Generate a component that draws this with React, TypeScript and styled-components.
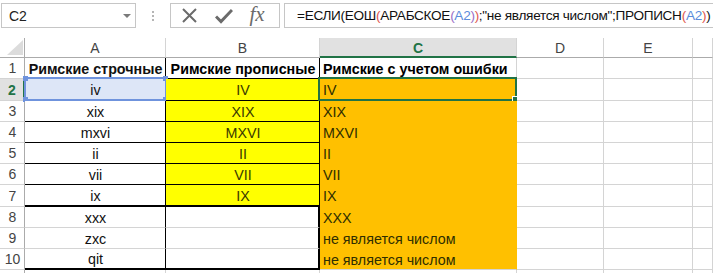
import React from 'react';
import styled, { createGlobalStyle } from 'styled-components';

const GlobalStyle = createGlobalStyle`
	body {
		margin: 0;
		background: #fff;
		font-family: "Liberation Sans", Arial, sans-serif;
		overflow: hidden;
	}
`;

type Row = { a: string; b: string; c: string };

const rows: Row[] = [
	{ a: 'Римские строчные', b: 'Римские прописные', c: 'Римские с учетом ошибки' },
	{ a: 'iv', b: 'IV', c: 'IV' },
	{ a: 'xix', b: 'XIX', c: 'XIX' },
	{ a: 'mxvi', b: 'MXVI', c: 'MXVI' },
	{ a: 'ii', b: 'II', c: 'II' },
	{ a: 'vii', b: 'VII', c: 'VII' },
	{ a: 'ix', b: 'IX', c: 'IX' },
	{ a: 'xxx', b: '', c: 'XXX' },
	{ a: 'zxc', b: '', c: 'не является числом' },
	{ a: 'qit', b: '', c: 'не является числом' },
];

const columns = ['A', 'B', 'C', 'D', 'E', ''];

const GRID = '#d4d4d4';
const BLACK = '#000';
const GREEN = '#217346';
const YELLOW = '#ffff00';
const ORANGE = '#ffc000';

// borders of the A:B block, by row number
const blockBottom = (n: number) => {
	if (n <= 6) return `1px solid ${BLACK}`;
	if (n === 7 || n === 10) return `2px solid ${BLACK}`;
	return `1px solid ${GRID}`;
};

const App: React.FC = () => {
	return (
		<Page>
			<GlobalStyle />
			<FormulaBar>
				<NameBox>
					<span>C2</span>
					<DropArrow />
				</NameBox>
				<Grip>
					<i />
					<i />
					<i />
				</Grip>
				<ButtonGroup>
					<svg width="17" height="17" viewBox="0 0 17 17">
						<path d="M2 2 L15 15 M15 2 L2 15" stroke="#6b6b6b" strokeWidth="2" fill="none" />
					</svg>
					<svg width="18" height="16" viewBox="0 0 18 16">
						<path d="M1 8.5 L6 13.5 L17 2" stroke="#6b6b6b" strokeWidth="3" fill="none" />
					</svg>
					<Fx>fx</Fx>
				</ButtonGroup>
				<FormulaInput>
					=ЕСЛИ(ЕОШ<Red>(</Red>АРАБСКОЕ<Purple>(</Purple>
					<Ref>A2</Ref>
					<Purple>)</Purple>
					<Red>)</Red>;"не является числом";ПРОПИСН<Red>(</Red>
					<Ref>A2</Ref>
					<Red>)</Red>)
				</FormulaInput>
			</FormulaBar>

			<Sheet>
				<Corner>
					<svg width="16" height="15" viewBox="0 0 16 15">
						<polygon points="16,0 16,15 0,15" fill="#dcdcdc" />
					</svg>
				</Corner>
				{columns.map((col, i) => (
					<ColHead key={i} $active={col === 'C'}>
						{col}
					</ColHead>
				))}

				{rows.map((row, i) => {
					const n = i + 1;
					return (
						<React.Fragment key={n}>
							<RowHead $active={n === 2}>{n}</RowHead>
							<Cell
								$align="center"
								$bold={n === 1}
								$fill={n === 2 ? '#dde6f7' : '#fff'}
								$right={`1px solid ${BLACK}`}
								$bottom={blockBottom(n)}
							>
								{row.a}
								{n === 2 && (
									<RefBox>
										<Handle $pos="tl" />
										<Handle $pos="tr" />
										<Handle $pos="bl" />
										<Handle $pos="br" />
									</RefBox>
								)}
							</Cell>
							<Cell
								$align="center"
								$bold={n === 1}
								$fill={n >= 2 && n <= 7 ? YELLOW : '#fff'}
								$color={n === 1 ? '#000' : '#3a3a00'}
								$right={n >= 8 ? `2px solid ${BLACK}` : `1px solid ${BLACK}`}
								$bottom={blockBottom(n)}
							>
								{row.b}
							</Cell>
							<Cell
								$align="left"
								$bold={n === 1}
								$fill={n === 1 ? '#fff' : ORANGE}
								$color={n === 1 ? '#000' : '#2e2e00'}
								$right={`1px solid ${n === 1 ? GRID : ORANGE}`}
								$bottom={`1px solid ${n === 1 || n === 10 ? GRID : ORANGE}`}
							>
								{row.c}
								{n === 2 && (
									<ActiveBox>
										<FillHandle />
									</ActiveBox>
								)}
							</Cell>
							<Cell />
							<Cell />
							<Cell />
						</React.Fragment>
					);
				})}
				<RowHead />
				<Cell />
				<Cell />
				<Cell />
				<Cell />
				<Cell />
				<Cell />
			</Sheet>
		</Page>
	);
};

export default App;

const Page = styled.div`
	width: 713px;
	height: 273px;
	overflow: hidden;
	background: #fff;
`;

const FormulaBar = styled.div`
	display: flex;
	align-items: stretch;
	height: 25px;
	padding: 3px 0 0 1px;
	margin-bottom: 10px;

	& > * {
		flex-shrink: 0;
	}
`;

const NameBox = styled.div`
	box-sizing: border-box;
	width: 135px;
	border: 1px solid #c6c6c6;
	display: flex;
	align-items: center;
	justify-content: space-between;
	padding: 0 4px 0 7px;
	font-size: 14px;
	color: #222;
`;

const DropArrow = styled.div`
	width: 0;
	height: 0;
	border-left: 4px solid transparent;
	border-right: 4px solid transparent;
	border-top: 4px solid #7a7a7a;
`;

const Grip = styled.div`
	width: 34px;
	display: flex;
	flex-direction: column;
	align-items: center;
	justify-content: center;
	gap: 2px;

	i {
		width: 2px;
		height: 2px;
		background: #b5b5b5;
	}
`;

const ButtonGroup = styled.div`
	box-sizing: border-box;
	width: 110px;
	border: 1px solid #c6c6c6;
	display: flex;
	align-items: center;
	justify-content: space-around;
	padding: 0 6px 0 2px;
`;

const Fx = styled.span`
	font-family: "Liberation Serif", "Times New Roman", serif;
	font-style: italic;
	font-size: 21px;
	color: #6b6b6b;
	line-height: 1;
	margin-top: -2px;
`;

const FormulaInput = styled.div`
	box-sizing: border-box;
	flex: 1 1 auto !important;
	min-width: 0;
	overflow: hidden;
	margin-left: 4px;
	border: 1px solid #c6c6c6;
	border-right: 0;
	display: flex;
	align-items: center;
	padding-left: 12px;
	font-size: 13.6px;
	letter-spacing: -0.3px;
	color: #111;
	white-space: pre;
`;

const Red = styled.span`
	color: #e0574f;
`;

const Purple = styled.span`
	color: #9b6fc6;
`;

const Ref = styled.span`
	color: #5b8cdb;
`;

const Sheet = styled.div`
	display: grid;
	grid-template-columns: 25px 141px 154px 197px 87px 89px 1fr;
	grid-template-rows: 20px 21px 22px 21px 21px 21px 21px 22px 21px 21px 21px 21px;
`;

const Corner = styled.div`
	box-sizing: border-box;
	border-right: 1px solid #ababab;
	border-bottom: 1px solid #ababab;
	display: flex;
	align-items: flex-end;
	justify-content: flex-end;
	padding: 0 1px 2px 0;
`;

const ColHead = styled.div<{ $active?: boolean }>`
	box-sizing: border-box;
	background: ${(p) => (p.$active ? '#e1e1e1' : '#fff')};
	border-right: 1px solid ${GRID};
	border-bottom: ${(p) => (p.$active ? `2px solid ${GREEN}` : '1px solid #ababab')};
	color: ${(p) => (p.$active ? GREEN : '#444')};
	font-weight: ${(p) => (p.$active ? 'bold' : 'normal')};
	font-size: 14px;
	display: flex;
	align-items: center;
	justify-content: center;
	padding-top: ${(p) => (p.$active ? '1px' : '0')};
`;

const RowHead = styled.div<{ $active?: boolean }>`
	box-sizing: border-box;
	background: ${(p) => (p.$active ? '#e1e1e1' : '#fff')};
	border-right: ${(p) => (p.$active ? `2px solid ${GREEN}` : '1px solid #ababab')};
	border-bottom: 1px solid ${GRID};
	color: ${(p) => (p.$active ? GREEN : '#444')};
	font-weight: ${(p) => (p.$active ? 'bold' : 'normal')};
	font-size: 14px;
	display: flex;
	align-items: center;
	justify-content: center;
	padding-left: 1px;
`;

const Cell = styled.div<{
	$align?: 'left' | 'center';
	$bold?: boolean;
	$fill?: string;
	$color?: string;
	$right?: string;
	$bottom?: string;
}>`
	position: relative;
	box-sizing: border-box;
	background: ${(p) => p.$fill || '#fff'};
	border-right: ${(p) => p.$right || `1px solid ${GRID}`};
	border-bottom: ${(p) => p.$bottom || `1px solid ${GRID}`};
	color: ${(p) => p.$color || '#111'};
	font-size: 14.3px;
	font-weight: ${(p) => (p.$bold ? 'bold' : 'normal')};
	display: flex;
	align-items: center;
	justify-content: ${(p) => (p.$align === 'center' ? 'center' : 'flex-start')};
	padding: 1px 2px 0 3px;
	white-space: nowrap;
`;

const RefBox = styled.div`
	position: absolute;
	left: -1px;
	top: -2px;
	right: -2px;
	bottom: -1px;
	border: 2px solid #6f93dd;
	pointer-events: none;
`;

const Handle = styled.div<{ $pos: 'tl' | 'tr' | 'bl' | 'br' }>`
	position: absolute;
	width: 5px;
	height: 5px;
	background: #6f93dd;
	${(p) => (p.$pos[0] === 't' ? 'top: -3px;' : 'bottom: -3px;')}
	${(p) => (p.$pos[1] === 'l' ? 'left: -3px;' : 'right: -3px;')}
`;

const ActiveBox = styled.div`
	position: absolute;
	left: -2px;
	top: -2px;
	right: -1px;
	bottom: -1px;
	border: 2px solid ${GREEN};
	pointer-events: none;
`;

const FillHandle = styled.div`
	position: absolute;
	right: -4px;
	bottom: -4px;
	width: 5px;
	height: 5px;
	background: ${GREEN};
	border: 1px solid #fff;
`;
